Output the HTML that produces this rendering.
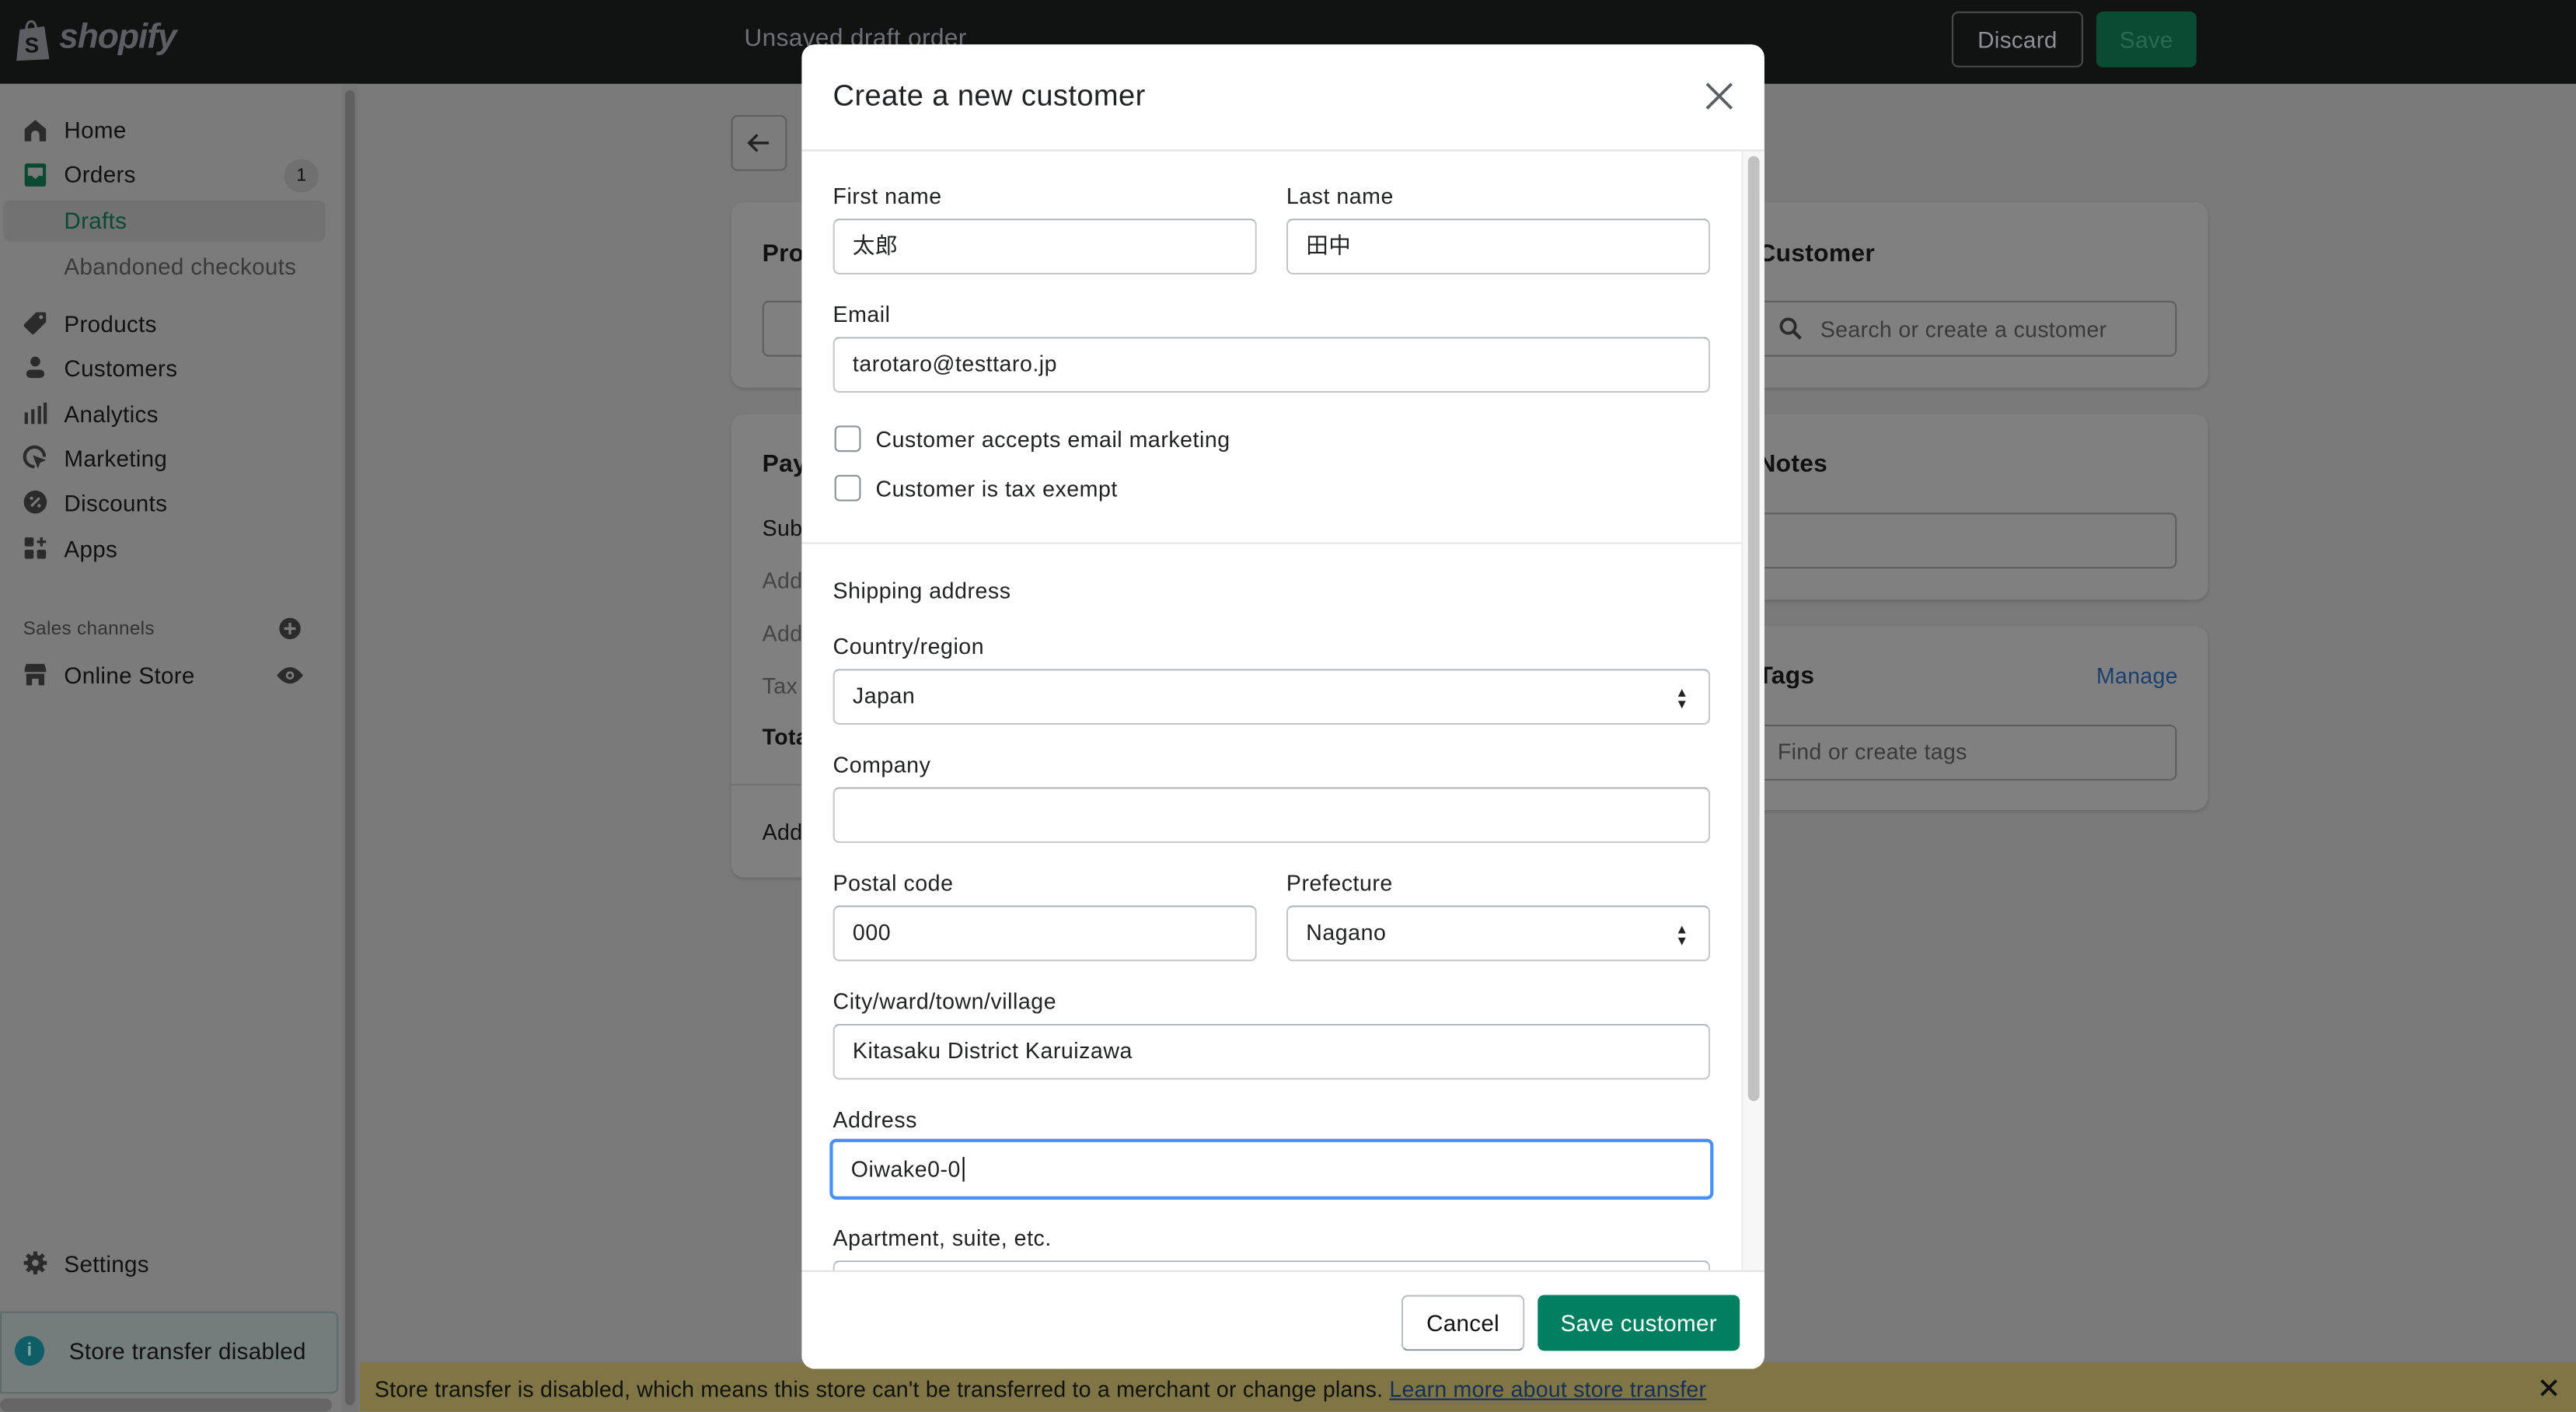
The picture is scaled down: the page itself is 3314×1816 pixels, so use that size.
<!DOCTYPE html>
<html><head><meta charset="utf-8">
<style>
*{box-sizing:border-box;margin:0;padding:0}
html,body{width:3314px;height:1816px;overflow:hidden;background:#7a7a7a}
#w{position:absolute;left:0;top:0;width:1568px;height:859px;transform:scale(2.11352);transform-origin:0 0;font-family:"Liberation Sans","Noto Sans CJK JP",sans-serif;color:#111;font-size:14px;letter-spacing:0.15px}
.a{position:absolute}
.top{left:0;top:0;width:1568px;height:51px;background:#111212}
.side{left:0;top:51px;width:208px;height:808px;background:#7b7b7b}
.nav{left:39px;font-size:14px;color:#111}
.ic{position:absolute;left:14px;width:15px;height:15px}
.card{background:#808080;border-radius:8px;box-shadow:0 1px 2px rgba(0,0,0,.15)}
.h{font-weight:bold;font-size:15px;color:#111}
.in{background:#808080;border:1px solid #5e5e5e;border-radius:4px}
.modal{left:488px;top:27px;width:586px;height:806px;background:#fff;border-radius:8px;overflow:hidden}
.lbl{font-size:13.5px;color:#202223;letter-spacing:0.25px}
.f{position:absolute;background:#fff;border:1px solid #c4c6c9;border-top-color:#aeb4b9;border-radius:4px;height:34px;font-size:13.5px;padding:0 0 0 11px;line-height:32px;color:#202223;letter-spacing:0.25px}
.cb{position:absolute;width:16px;height:16px;border:1.5px solid #8c9196;border-radius:3px;background:#fff}
</style></head><body><div id="w">
<div class="a top"></div>
<svg class="a" style="left:9px;top:10px" width="24" height="28" viewBox="0 0 24 28"><path d="M3 8 L18 6 L21 26 L1 27 Z" fill="#5b5f63"/><path d="M7 8 C7 2 12 1 13 7" stroke="#5b5f63" stroke-width="1.5" fill="none"/><text x="6" y="22" font-size="13" font-weight="bold" fill="#111" font-family="Liberation Sans">S</text></svg>
<div class="a" style="left:36px;top:11px;font-size:21px;font-weight:bold;font-style:italic;color:#5b5f63;letter-spacing:-0.5px">shopify</div>
<div class="a" style="left:453px;top:15px;font-size:15px;color:#6d7175">Unsaved draft order</div>
<div class="a" style="left:1188px;top:7px;width:80px;height:34px;border:1px solid #4a4a4a;border-radius:4px;color:#8c9196;font-size:14px;text-align:center;line-height:32px">Discard</div>
<div class="a" style="left:1276px;top:7px;width:61px;height:34px;background:#0b4a33;border-radius:4px;color:#2b6a52;font-size:14px;text-align:center;line-height:34px">Save</div>

<div class="a side"></div>
<div class="a" style="left:208px;top:51px;width:10px;height:808px;background:#767676"></div>
<div class="a" style="left:210px;top:55px;width:6px;height:800px;background:#5f5f5f;border-radius:3px"></div>

<svg class="ic" style="top:72px" viewBox="0 0 15 15"><path d="M1 6.5 L7.5 1 L14 6.5 V14 H10 V10 A2.5 2.5 0 0 0 5 10 V14 H1 Z" fill="#2b2b2b"/></svg>
<div class="a nav" style="top:71px">Home</div>
<svg class="ic" style="top:99px" viewBox="0 0 15 15"><path d="M1 2 Q1 0.5 2.5 0.5 H12.5 Q14 0.5 14 2 V13 Q14 14.5 12.5 14.5 H2.5 Q1 14.5 1 13 Z" fill="#0a4a33"/><path d="M3 3 H12 V8 H9.5 L7.5 10 L5.5 8 H3 Z" fill="#7b7b7b"/></svg>
<div class="a nav" style="top:98px">Orders</div>
<div class="a" style="left:173px;top:97px;width:21px;height:20px;border-radius:10px;background:#707070;font-size:11px;text-align:center;line-height:20px">1</div>
<div class="a" style="left:2px;top:122px;width:196px;height:25px;background:#727272;border-radius:4px"></div>
<div class="a" style="left:39px;top:126px;color:#0a4a33;font-size:14px">Drafts</div>
<div class="a" style="left:39px;top:154px;color:#3a3a3a;font-size:14px">Abandoned checkouts</div>
<svg class="ic" style="top:189px" viewBox="0 0 15 15"><path d="M8 1 H13 Q14 1 14 2 V7 L7 14 Q6 15 5 14 L1 10 Q0 9 1 8 Z" fill="#2b2b2b"/><circle cx="11" cy="4" r="1.2" fill="#7b7b7b"/></svg>
<div class="a nav" style="top:189px">Products</div>
<svg class="ic" style="top:216px" viewBox="0 0 15 15"><circle cx="7.5" cy="4" r="3" fill="#2b2b2b"/><rect x="2" y="9" width="11" height="5" rx="2.5" fill="#2b2b2b"/></svg>
<div class="a nav" style="top:216px">Customers</div>
<svg class="ic" style="top:244px" viewBox="0 0 15 15"><rect x="1" y="7" width="2" height="7" fill="#2b2b2b"/><rect x="5" y="5" width="2" height="9" fill="#2b2b2b"/><rect x="9" y="3" width="2" height="11" fill="#2b2b2b"/><rect x="12.5" y="1" width="2" height="13" fill="#2b2b2b"/></svg>
<div class="a nav" style="top:244px">Analytics</div>
<svg class="ic" style="top:271px" viewBox="0 0 15 15"><path d="M7 13 A6 6 0 1 1 13 7" stroke="#2b2b2b" stroke-width="2" fill="none"/><path d="M6 6 L14 9 L10.5 10.5 L9 14 Z" fill="#2b2b2b"/></svg>
<div class="a nav" style="top:271px">Marketing</div>
<svg class="ic" style="top:298px" viewBox="0 0 15 15"><circle cx="7.5" cy="7.5" r="7" fill="#2b2b2b"/><path d="M5 10 L10 5" stroke="#7b7b7b" stroke-width="1.5"/><circle cx="5.2" cy="5.2" r="1" fill="#7b7b7b"/><circle cx="9.8" cy="9.8" r="1" fill="#7b7b7b"/></svg>
<div class="a nav" style="top:298px">Discounts</div>
<svg class="ic" style="top:326px" viewBox="0 0 15 15"><rect x="1" y="1" width="5.5" height="5.5" rx="1" fill="#2b2b2b"/><rect x="1" y="8.5" width="5.5" height="5.5" rx="1" fill="#2b2b2b"/><rect x="8.5" y="8.5" width="5.5" height="5.5" rx="1" fill="#2b2b2b"/><path d="M11.2 1 V6.5 M8.5 3.7 H14" stroke="#2b2b2b" stroke-width="1.6"/></svg>
<div class="a nav" style="top:326px">Apps</div>
<div class="a" style="left:14px;top:377px;font-size:11.5px;color:#333">Sales channels</div>
<svg class="a" style="left:170px;top:376px" width="13" height="13" viewBox="0 0 13 13"><circle cx="6.5" cy="6.5" r="6.5" fill="#2b2b2b"/><path d="M6.5 3 V10 M3 6.5 H10" stroke="#7b7b7b" stroke-width="1.6"/></svg>
<svg class="ic" style="top:403px" viewBox="0 0 15 15"><path d="M1 4 L2 1 H13 L14 4 V6 H1 Z" fill="#2b2b2b"/><path d="M2 7 H13 V14 H9.5 V10 H5.5 V14 H2 Z" fill="#2b2b2b"/></svg>
<div class="a nav" style="top:403px">Online Store</div>
<svg class="a" style="left:168px;top:405px" width="17" height="12" viewBox="0 0 17 12"><path d="M0.5 6 Q8.5 -4 16.5 6 Q8.5 16 0.5 6 Z" fill="#2b2b2b"/><circle cx="8.5" cy="6" r="2.5" fill="#7b7b7b"/><circle cx="8.5" cy="6" r="1.2" fill="#2b2b2b"/></svg>
<svg class="ic" style="top:761px" viewBox="0 0 15 15"><circle cx="7.5" cy="7.5" r="5" fill="#2b2b2b"/><path d="M7.5 0.5 V14.5 M0.5 7.5 H14.5 M2.5 2.5 L12.5 12.5 M12.5 2.5 L2.5 12.5" stroke="#2b2b2b" stroke-width="2.4"/><circle cx="7.5" cy="7.5" r="2" fill="#7b7b7b"/></svg>
<div class="a nav" style="top:761px">Settings</div>
<div class="a" style="left:0;top:798px;width:206px;height:50px;background:#757c7c;border:1px solid #5e6b6b;border-radius:0 4px 4px 0"></div>
<div class="a" style="left:9px;top:813px;width:18px;height:18px;border-radius:9px;background:#0f5d67;color:#8aa;font-size:11px;font-weight:bold;text-align:center;line-height:18px">i</div>
<div class="a" style="left:42px;top:814px;font-size:14px">Store transfer disabled</div>
<div class="a" style="left:0;top:851px;width:202px;height:8px;background:#666;border-radius:4px"></div>

<div class="a" style="left:445px;top:70px;width:34px;height:34px;border:1px solid #5e5e5e;border-radius:4px;background:#7c7c7c"></div>
<svg class="a" style="left:454px;top:79px" width="16" height="16" viewBox="0 0 16 16"><path d="M14 8 H2 M7 3 L2 8 L7 13" stroke="#222" stroke-width="1.6" fill="none"/></svg>
<div class="a card" style="left:445px;top:123px;width:600px;height:113px"></div>
<div class="a h" style="left:464px;top:146px">Products</div>
<div class="a in" style="left:464px;top:183px;width:200px;height:34px"></div>
<div class="a card" style="left:445px;top:252px;width:600px;height:282px"></div>
<div class="a h" style="left:464px;top:274px">Payment</div>
<div class="a" style="left:464px;top:314px;font-size:13.5px">Subtotal</div>
<div class="a" style="left:464px;top:346px;font-size:13.5px;color:#444">Add discount</div>
<div class="a" style="left:464px;top:378px;font-size:13.5px;color:#444">Add shipping</div>
<div class="a" style="left:464px;top:410px;font-size:13.5px;color:#444">Tax</div>
<div class="a" style="left:464px;top:441px;font-size:13.5px;font-weight:bold">Total</div>
<div class="a" style="left:445px;top:477px;width:600px;height:1px;background:#727272"></div>
<div class="a" style="left:464px;top:499px;font-size:13.5px">Add payment</div>

<div class="a card" style="left:1040px;top:123px;width:304px;height:113px"></div>
<div class="a h" style="left:1070px;top:146px">Customer</div>
<div class="a in" style="left:1060px;top:183px;width:265px;height:34px"></div>
<svg class="a" style="left:1083px;top:193px" width="14" height="14" viewBox="0 0 14 14"><circle cx="5.5" cy="5.5" r="4.3" stroke="#2b2b2b" stroke-width="1.8" fill="none"/><path d="M8.7 8.7 L13 13" stroke="#2b2b2b" stroke-width="2"/></svg>
<div class="a" style="left:1108px;top:193px;font-size:13.5px;color:#3a3a3a">Search or create a customer</div>
<div class="a card" style="left:1040px;top:252px;width:304px;height:113px"></div>
<div class="a h" style="left:1070px;top:274px">Notes</div>
<div class="a in" style="left:1060px;top:312px;width:265px;height:34px"></div>
<div class="a card" style="left:1040px;top:381px;width:304px;height:112px"></div>
<div class="a h" style="left:1070px;top:403px">Tags</div>
<div class="a" style="left:1276px;top:404px;font-size:13.5px;color:#1b3f6e">Manage</div>
<div class="a in" style="left:1060px;top:441px;width:265px;height:34px"></div>
<div class="a" style="left:1082px;top:450px;font-size:13.5px;color:#3a3a3a">Find or create tags</div>

<div class="a" style="left:219px;top:829px;width:1349px;height:30px;background:#7f7545"></div>
<div class="a" style="left:228px;top:838px;font-size:13.5px;color:#111;letter-spacing:0.1px;white-space:nowrap">Store transfer is disabled, which means this store can't be transferred to a merchant or change plans. <span style="color:#14305a;text-decoration:underline">Learn more about store transfer</span></div>
<svg class="a" style="left:1546px;top:839px" width="11" height="11" viewBox="0 0 11 11"><path d="M1 1L10 10M10 1L1 10" stroke="#111" stroke-width="1.8"/></svg>

<div class="a modal">
 <div class="a" style="left:19px;top:21px;font-size:18px;color:#202223;letter-spacing:0.2px">Create a new customer</div>
 <svg class="a" style="left:550px;top:23px" width="17" height="17" viewBox="0 0 17 17"><path d="M1 1L16 16M16 1L1 16" stroke="#5c5f62" stroke-width="1.8"/></svg>
 <div class="a" style="left:0;top:64px;width:586px;height:1px;background:#e1e3e5"></div>
 <div class="a" style="left:572px;top:65px;width:14px;height:681px;background:#f7f7f7;border-left:1px solid #ececec"></div>
 <div class="a" style="left:576px;top:68px;width:7px;height:575px;background:#c1c1c1;border-radius:4px"></div>
 <div class="a lbl" style="left:19px;top:85px">First name</div>
 <div class="a lbl" style="left:295px;top:85px">Last name</div>
 <div class="f" style="left:19px;top:106px;width:258px">太郎</div>
 <div class="f" style="left:295px;top:106px;width:258px">田中</div>
 <div class="a lbl" style="left:19px;top:157px">Email</div>
 <div class="f" style="left:19px;top:178px;width:534px">tarotaro@testtaro.jp</div>
 <div class="cb" style="left:20px;top:232px"></div>
 <div class="a lbl" style="left:45px;top:233px">Customer accepts email marketing</div>
 <div class="cb" style="left:20px;top:262px"></div>
 <div class="a lbl" style="left:45px;top:263px">Customer is tax exempt</div>
 <div class="a" style="left:0;top:303px;width:572px;height:1px;background:#e1e3e5"></div>
 <div class="a lbl" style="left:19px;top:325px">Shipping address</div>
 <div class="a lbl" style="left:19px;top:359px">Country/region</div>
 <div class="f" style="left:19px;top:380px;width:534px">Japan<span class="a" style="right:12px;font-size:8px;line-height:7px;top:10px">▲<br>▼</span></div>
 <div class="a lbl" style="left:19px;top:431px">Company</div>
 <div class="f" style="left:19px;top:452px;width:534px"></div>
 <div class="a lbl" style="left:19px;top:503px">Postal code</div>
 <div class="a lbl" style="left:295px;top:503px">Prefecture</div>
 <div class="f" style="left:19px;top:524px;width:258px">000</div>
 <div class="f" style="left:295px;top:524px;width:258px">Nagano<span class="a" style="right:12px;font-size:8px;line-height:7px;top:10px">▲<br>▼</span></div>
 <div class="a lbl" style="left:19px;top:575px">City/ward/town/village</div>
 <div class="f" style="left:19px;top:596px;width:534px">Kitasaku District Karuizawa</div>
 <div class="a lbl" style="left:19px;top:647px">Address</div>
 <div class="f" style="left:17px;top:666px;width:538px;height:37px;border:2px solid #458fff;line-height:33px">Oiwake0-0<span style="border-left:1px solid #000;margin-left:1px"></span></div>
 <div class="a lbl" style="left:19px;top:719px">Apartment, suite, etc.</div>
 <div class="f" style="left:19px;top:740px;width:534px"></div>
 <div class="a" style="left:0;top:746px;width:586px;height:60px;background:#fff;border-top:1px solid #e1e3e5"></div>
 <div class="a" style="left:365px;top:761px;width:75px;height:34px;border:1px solid #babfc3;border-bottom-color:#8c9196;border-radius:4px;font-size:14px;text-align:center;line-height:32px;background:#fff">Cancel</div>
 <div class="a" style="left:448px;top:761px;width:123px;height:34px;background:#008060;border-radius:4px;color:#fff;font-size:14px;text-align:center;line-height:34px">Save customer</div>
</div>
</div></body></html>
